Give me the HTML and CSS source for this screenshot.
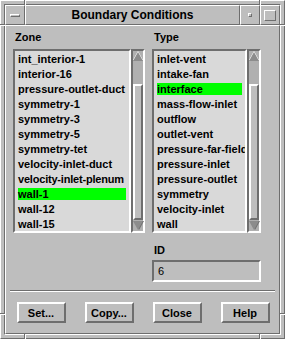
FILE: index.html
```html
<!DOCTYPE html>
<html lang="en">
<head>
<meta charset="utf-8">
<title>Boundary Conditions</title>
<link rel="stylesheet" href="styles.css">
</head>
<body>
<div class="window">
  <span class="mark mark-tl-v"></span><span class="mark mark-tl-h"></span>
  <span class="mark mark-tr-v"></span><span class="mark mark-tr-h"></span>
  <span class="mark mark-bl-v"></span><span class="mark mark-bl-h"></span>
  <span class="mark mark-br-v"></span><span class="mark mark-br-h"></span>
  <div class="frame">
    <div class="titlebar">
      <div class="tbtn"><span class="dash"></span></div>
      <div class="title">Boundary Conditions</div>
      <div class="tbtn"><span class="dot"></span></div>
      <div class="tbtn"><span class="square"></span></div>
    </div>
    <div class="client">
      <div class="cols">
        <div class="col col-zone">
          <div class="label">Zone</div>
          <div class="listbox">
            <ul class="list">
              <li>int_interior-1</li>
              <li>interior-16</li>
              <li>pressure-outlet-duct</li>
              <li>symmetry-1</li>
              <li>symmetry-3</li>
              <li>symmetry-5</li>
              <li>symmetry-tet</li>
              <li>velocity-inlet-duct</li>
              <li class="tight">velocity-inlet-plenum</li>
              <li class="sel">wall-1</li>
              <li>wall-12</li>
              <li>wall-15</li>
            </ul>
            <div class="scrollbar">
              <div class="arrow up"></div>
              <div class="trough"><div class="thumb"></div></div>
              <div class="arrow down"></div>
            </div>
          </div>
        </div>
        <div class="col col-type">
          <div class="label">Type</div>
          <div class="listbox">
            <ul class="list">
              <li>inlet-vent</li>
              <li>intake-fan</li>
              <li class="sel">interface</li>
              <li>mass-flow-inlet</li>
              <li>outflow</li>
              <li>outlet-vent</li>
              <li>pressure-far-field</li>
              <li>pressure-inlet</li>
              <li>pressure-outlet</li>
              <li>symmetry</li>
              <li>velocity-inlet</li>
              <li>wall</li>
            </ul>
            <div class="scrollbar">
              <div class="arrow up"></div>
              <div class="trough"><div class="thumb"></div></div>
              <div class="arrow down"></div>
            </div>
          </div>
          <div class="label id-label">ID</div>
          <div class="field">6</div>
        </div>
      </div>
      <div class="sep"></div>
      <div class="buttons">
        <button class="btn">Set...</button>
        <button class="btn">Copy...</button>
        <button class="btn">Close</button>
        <button class="btn">Help</button>
      </div>
    </div>
  </div>
</div>
</body>
</html>
```

FILE: styles.css
```css
:root {
  --bg: #bebebe;
  --light: #ffffff;
  --dark: #6e6e6e;
  --list: #d9d9d9;
}
body {
  margin: 0;
  background: var(--bg);
  font-family: "Liberation Sans", Arial, sans-serif;
  font-weight: bold;
  font-size: 11px;
  color: #000;
}
.window {
  position: relative;
  width: 285px;
  height: 339px;
  box-sizing: border-box;
  border: 1px solid;
  border-color: var(--light) var(--dark) var(--dark) var(--light);
  padding: 3px;
  background: var(--bg);
}
.frame {
  height: 100%;
  box-sizing: border-box;
  border: 1px solid;
  border-color: var(--dark) var(--light) var(--light) var(--dark);
  display: flex;
  flex-direction: column;
}

/* resize handle marks on the frame */
.mark {
  position: absolute;
  background: var(--dark);
  box-shadow: 1px 1px 0 var(--light);
}
.mark-tl-v, .mark-tr-v { top: -1px; width: 1px; height: 5px; }
.mark-bl-v, .mark-br-v { bottom: -1px; width: 1px; height: 5px; }
.mark-tl-v, .mark-bl-v { left: 23px; }
.mark-tr-v, .mark-br-v { left: 258px; }
.mark-tl-h, .mark-bl-h { left: -1px; height: 1px; width: 5px; }
.mark-tr-h, .mark-br-h { right: -1px; height: 1px; width: 5px; }
.mark-tl-h, .mark-tr-h { top: 23px; }
.mark-bl-h, .mark-br-h { top: 312px; }

.titlebar {
  display: flex;
  height: 20px;
  flex: none;
}
.tbtn, .title {
  box-sizing: border-box;
  border: 1px solid;
  border-color: var(--light) var(--dark) var(--dark) var(--light);
}
.tbtn {
  width: 20px;
  display: flex;
  align-items: center;
  justify-content: center;
}
.title {
  flex: 1;
  text-align: center;
  font-size: 12px;
  line-height: 18px;
}
.dash {
  width: 10px;
  height: 3px;
  box-sizing: border-box;
  border: 1px solid;
  border-color: var(--light) var(--dark) var(--dark) var(--light);
}
.dot {
  width: 4px;
  height: 4px;
  box-sizing: border-box;
  border: 1px solid;
  border-color: var(--light) var(--dark) var(--dark) var(--light);
}
.square {
  width: 12px;
  height: 11px;
  box-sizing: border-box;
  border: 1px solid;
  border-color: var(--light) var(--dark) var(--dark) var(--light);
}

.client {
  flex: 1;
  box-sizing: border-box;
  border: 1px solid;
  border-color: var(--light) var(--dark) var(--dark) var(--light);
  padding: 5px 6px 0 7px;
}
.cols {
  display: flex;
  gap: 7px;
}
.col-zone { width: 132px; }
.col-type { width: 109px; }
.label {
  padding-left: 2px;
  line-height: 13px;
  height: 13px;
  margin-bottom: 5px;
}
.listbox {
  display: flex;
  height: 184px;
}
.list {
  flex: 1;
  min-width: 0;
  margin: 0;
  padding: 2px 0 0 0;
  list-style: none;
  background: var(--list);
  box-sizing: border-box;
  border: 2px solid;
  border-color: var(--dark) var(--light) var(--light) var(--dark);
  overflow: hidden;
}
.list li {
  height: 12px;
  line-height: 12px;
  margin: 0 3px 3px 3px;
  white-space: nowrap;
}
.list li.tight { letter-spacing: -0.2px; }
.list li.sel { background: #00ff00; }
.scrollbar {
  width: 14px;
  flex: none;
  box-sizing: border-box;
  border: 2px solid;
  border-color: var(--dark) var(--light) var(--light) var(--dark);
  background: #b0b0b0;
  display: flex;
  flex-direction: column;
  align-items: center;
}
.arrow {
  width: 0;
  height: 0;
  border-left: 5px solid transparent;
  border-right: 5px solid transparent;
  flex: none;
}
.arrow.up {
  margin-top: 1px;
  border-bottom: 9px solid #8c8c8c;
  filter: drop-shadow(0 -1px 0 var(--light));
}
.arrow.down {
  margin-bottom: 1px;
  border-top: 9px solid #8c8c8c;
  filter: drop-shadow(1px 0 0 var(--dark));
}
.trough {
  flex: 1;
  width: 10px;
  display: flex;
  flex-direction: column;
  padding: 23px 0 1px 0;
  box-sizing: border-box;
}
.thumb {
  flex: 1;
  background: var(--bg);
  box-sizing: border-box;
  border: 2px solid;
  border-color: var(--light) var(--dark) var(--dark) var(--light);
}
.id-label {
  margin-top: 11px;
  margin-bottom: 3px;
}
.field {
  height: 22px;
  box-sizing: border-box;
  border: 2px solid;
  border-color: var(--dark) var(--light) var(--light) var(--dark);
  padding-left: 4px;
  line-height: 18px;
  font-weight: normal;
}
.sep {
  margin: 8px -2px 0 -3px;
  border-top: 1px solid var(--dark);
  border-bottom: 1px solid var(--light);
  height: 0;
}
.buttons {
  display: flex;
  justify-content: center;
  gap: 19px;
  margin-top: 10px;
}
.btn {
  width: 49px;
  height: 21px;
  padding: 0;
  background: var(--bg);
  font-family: inherit;
  font-weight: bold;
  font-size: 11px;
  color: #000;
  box-sizing: border-box;
  border: 2px solid;
  border-color: var(--light) var(--dark) var(--dark) var(--light);
}
```
